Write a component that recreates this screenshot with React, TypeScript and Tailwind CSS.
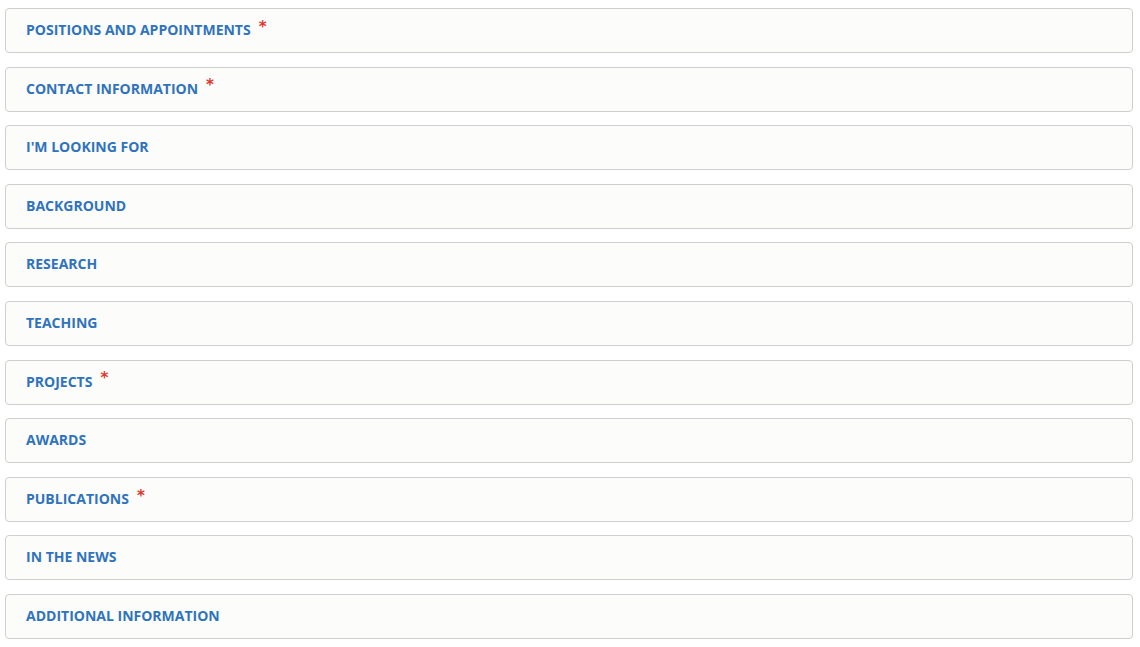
import React from "react";

interface Section {
  title: string;
  required?: boolean;
}

const sections: Section[] = [
  { title: "Positions and Appointments", required: true },
  { title: "Contact Information", required: true },
  { title: "I'm Looking For" },
  { title: "Background" },
  { title: "Research" },
  { title: "Teaching" },
  { title: "Projects", required: true },
  { title: "Awards" },
  { title: "Publications", required: true },
  { title: "In the News" },
  { title: "Additional Information" },
];

const App: React.FC = () => {
  return (
    <div className="min-h-screen bg-white pt-[8px] pl-[5px] pr-[7px]">
      <div className="flex flex-col gap-[13.6px]">
        {sections.map((s) => (
          <div
            key={s.title}
            className="h-[45px] flex items-center rounded-[4px] border-[1.5px] border-[#cfcfcf] bg-[#fcfcfa] pl-[20px] pb-[2px]"
          >
            <span
              className="text-[14px] font-bold uppercase text-[#2f73bd]"
              style={{ fontFamily: '"Open Sans", sans-serif' }}
            >
              {s.title}
            </span>
            {s.required && (
              <span
                className="ml-[8px] -mt-[5px] text-[15px] font-bold text-[#e0362c]"
                style={{ fontFamily: '"DejaVu Sans", sans-serif' }}
              >
                *
              </span>
            )}
          </div>
        ))}
      </div>
    </div>
  );
};

export default App;
